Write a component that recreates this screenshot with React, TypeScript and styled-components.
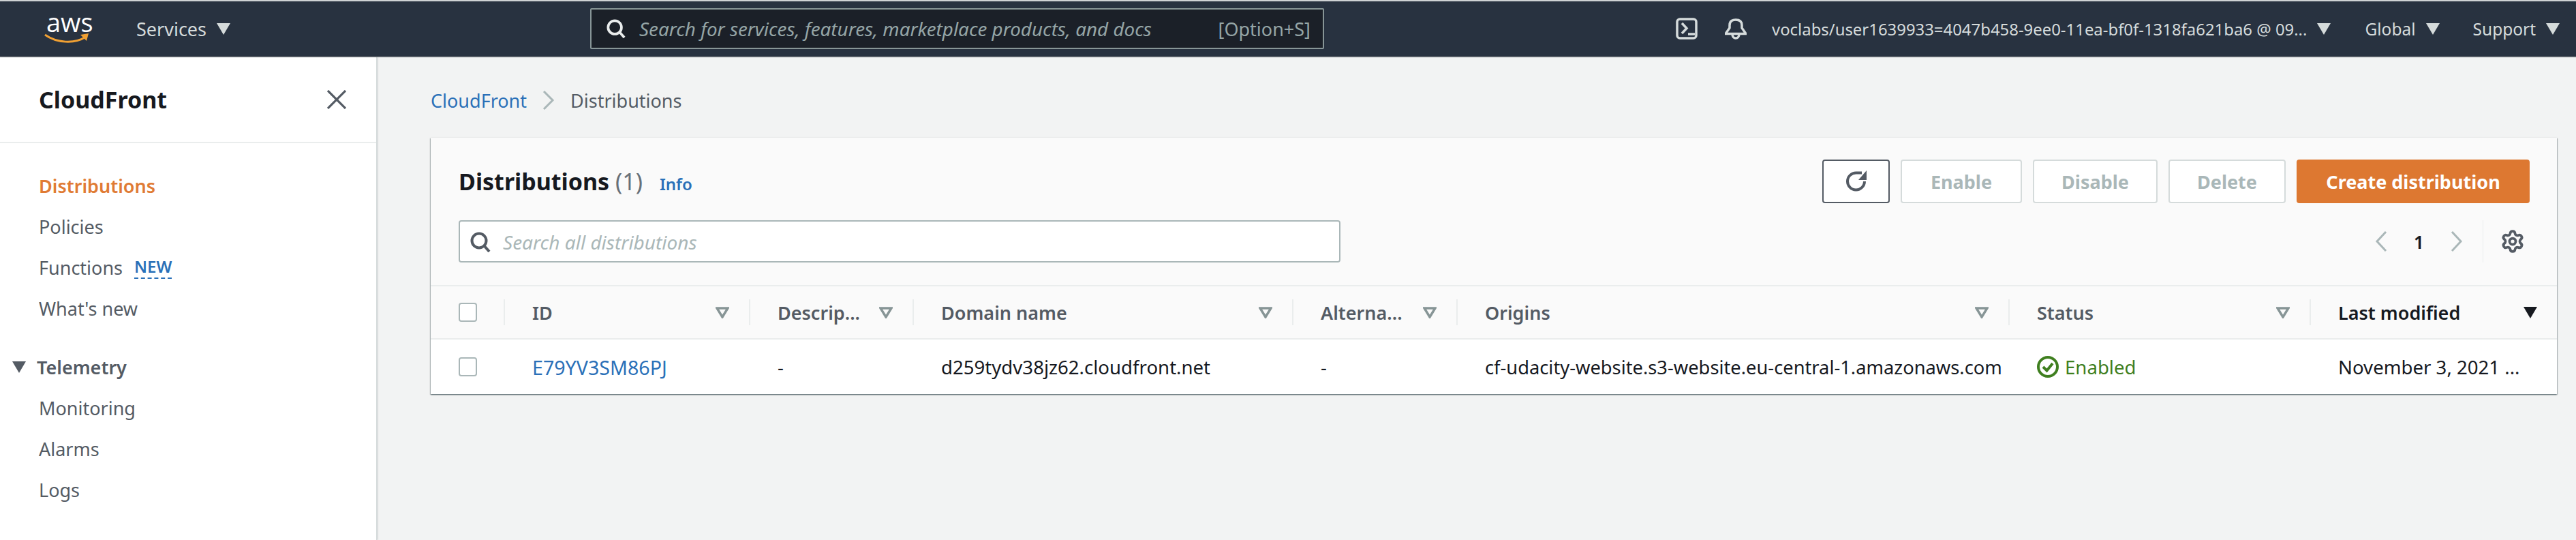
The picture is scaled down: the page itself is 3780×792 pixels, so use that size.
import React from 'react';
import styled, { createGlobalStyle } from 'styled-components';
import { Settings } from 'lucide-react';

const colors = {
  navy: '#283240',
  navyDark: '#1b2028',
  ink: '#16191f',
  slate: '#545b64',
  grey: '#879596',
  pale: '#aab7b8',
  line: '#eaeded',
  page: '#f2f3f3',
  blue: '#2a70b8',
  orange: '#dd7831',
  green: '#3f7f1f',
};

const GlobalStyle = createGlobalStyle`
  html, body {
    margin: 0;
    padding: 0;
    width: 3780px;
    height: 792px;
    overflow: hidden;
    background: ${colors.page};
    font-family: "Noto Sans", "Open Sans", sans-serif;
    font-size: 28px;
    color: ${colors.ink};
  }
  * { box-sizing: border-box; }
`;

const Page = styled.div`
  width: 3780px;
  height: 792px;
  overflow: hidden;
  display: flex;
  flex-direction: column;
`;

/* top bar */

const TopBar = styled.header`
  flex: none;
  height: 84px;
  display: flex;
  align-items: center;
  background: ${colors.navy};
  border-top: 2px solid #cfd2d4;
  border-bottom: 2px solid ${colors.slate};
  padding-left: 65px;
  padding-right: 22px;
`;

const Logo = styled.div`
  width: 66px;
  height: 44px;
  position: relative;
  flex: none;
`;

const LogoWord = styled.span`
  position: absolute;
  left: 3px;
  top: -14px;
  font-family: "Open Sans", sans-serif;
  font-size: 38px;
  line-height: 52px;
  color: #fff;
`;

const Smile = styled.svg`
  position: absolute;
  left: 0;
  bottom: 0;
`;

const BarText = styled.span<{ $size?: number }>`
  font-size: ${({ $size }) => $size ?? 23.9}px;
  color: #d5dbdb;
  white-space: nowrap;
`;

const BarMenu = styled.div<{ $left: number; $gap?: number }>`
  display: flex;
  align-items: center;
  gap: ${({ $gap }) => $gap ?? 15}px;
  margin-left: ${({ $left }) => $left}px;
  flex: none;
`;

const GlobalSearch = styled.div`
  flex: none;
  width: 1077px;
  height: 60px;
  margin-left: 528px;
  display: flex;
  align-items: center;
  padding: 0 18px 0 22px;
  background: ${colors.navyDark};
  border: 2px solid ${colors.grey};
  border-radius: 2px;
`;

const GlobalSearchText = styled.span`
  flex: 1;
  margin-left: 20px;
  font-size: 27.8px;
  font-style: italic;
  color: #95a5a6;
  white-space: nowrap;
`;

const Shortcut = styled.span`
  font-size: 27px;
  color: #95a5a6;
`;

const BarIcons = styled.div`
  display: flex;
  align-items: center;
  gap: 40px;
  margin-left: 516px;
  flex: none;
`;

/* body */

const Body = styled.div`
  flex: 1;
  display: flex;
  min-height: 0;
`;

const Sidebar = styled.aside`
  flex: none;
  width: 553px;
  background: #fff;
  border-right: 1px solid #d5dbdb;
  box-shadow: 1px 0 2px rgba(0, 28, 36, 0.18);
`;

const SidebarHead = styled.div`
  height: 126px;
  display: flex;
  align-items: center;
  justify-content: space-between;
  padding: 0 44px 0 57px;
  border-bottom: 2px solid ${colors.line};
`;

const SidebarTitle = styled.h2`
  margin: 0;
  font-size: 34px;
  font-weight: 700;
  color: ${colors.ink};
`;

const NavList = styled.nav`
  padding-top: 32px;
`;

const NavItem = styled.div<{ $active?: boolean }>`
  height: 60px;
  display: flex;
  align-items: center;
  gap: 17px;
  padding-left: 57px;
  font-size: 27px;
  font-weight: ${({ $active }) => ($active ? 600 : 400)};
  color: ${({ $active }) => ($active ? '#e07b34' : colors.slate)};
`;

const NewBadge = styled.span`
  font-size: 24px;
  font-weight: 600;
  line-height: 32px;
  color: ${colors.blue};
  border-bottom: 2px dashed ${colors.blue};
`;

const NavGroup = styled.div<{ $top: number }>`
  height: 60px;
  margin-top: ${({ $top }) => $top}px;
  display: flex;
  align-items: center;
  gap: 16px;
  padding-left: 18px;
  font-size: 27px;
  font-weight: 600;
  color: ${colors.slate};
`;

const Content = styled.main`
  flex: 1;
  min-width: 0;
  padding: 44px 28px 0 79px;
`;

const Breadcrumb = styled.div`
  height: 38px;
  display: flex;
  align-items: center;
  gap: 23px;
  font-size: 27px;
  color: ${colors.slate};
`;

const Crumb = styled.span`
  color: ${colors.blue};
`;

const Card = styled.section`
  margin-top: 36px;
  background: #fff;
  box-shadow: 0 1px 2px rgba(0, 28, 36, 0.5), 1px 1px 1px rgba(0, 28, 36, 0.15), -1px 1px 1px rgba(0, 28, 36, 0.15);
`;

const CardHead = styled.div`
  height: 218px;
  padding: 32px 40px 0 41px;
  background: #fafafa;
  border-bottom: 2px solid ${colors.line};
  display: flex;
  flex-direction: column;
  gap: 25px;
`;

const HeadRow = styled.div`
  display: flex;
  align-items: center;
  justify-content: space-between;
`;

const TitleGroup = styled.div`
  display: flex;
  align-items: baseline;
  gap: 25px;
`;

const Title = styled.h1`
  margin: 0;
  font-size: 34px;
  font-weight: 700;
  color: ${colors.ink};
`;

const Count = styled.span`
  font-weight: 400;
  color: #687078;
`;

const InfoLink = styled.span`
  font-size: 24px;
  font-weight: 600;
  color: ${colors.blue};
`;

const Actions = styled.div`
  display: flex;
  gap: 16px;
`;

const ActionButton = styled.button<{ $width: number; $variant?: 'icon' | 'primary' }>`
  width: ${({ $width }) => $width}px;
  height: 64px;
  padding: 0;
  display: flex;
  align-items: center;
  justify-content: center;
  font-family: inherit;
  font-size: 27px;
  font-weight: 700;
  border-radius: 4px;
  border: 2px solid ${({ $variant }) => ($variant === 'icon' ? colors.slate : $variant === 'primary' ? colors.orange : '#d5dbdb')};
  background: ${({ $variant }) => ($variant === 'primary' ? colors.orange : '#fff')};
  color: ${({ $variant }) => ($variant === 'primary' ? '#fff' : colors.pale)};
`;

const FilterBox = styled.div`
  width: 1294px;
  height: 62px;
  display: flex;
  align-items: center;
  gap: 18px;
  padding: 2px 0 0 15px;
  background: #fff;
  border: 2px solid ${colors.pale};
  border-radius: 4px;
  font-size: 28px;
  font-style: italic;
  color: ${colors.pale};
`;

const Pager = styled.div`
  display: flex;
  align-items: center;
  height: 62px;
`;

const PageNumber = styled.span`
  width: 93px;
  text-align: center;
  font-size: 27px;
  font-weight: 600;
  color: ${colors.ink};
`;

const GearSlot = styled.div`
  height: 62px;
  margin-left: 29px;
  padding: 0 7px 0 25px;
  display: flex;
  align-items: center;
  border-left: 1px solid ${colors.line};
  color: ${colors.slate};
`;

const GRID = '107px 360px 240px 557px 241px 810px 442px 363px';

const HeaderRow = styled.div`
  display: grid;
  grid-template-columns: ${GRID};
  height: 78px;
  align-items: center;
  background: #fafafa;
  border-bottom: 2px solid ${colors.line};
`;

const DataRow = styled.div`
  display: grid;
  grid-template-columns: ${GRID};
  height: 80px;
  align-items: center;
  background: #fff;
`;

const CheckCell = styled.div`
  padding-left: 41px;
`;

const CheckBox = styled.span`
  display: block;
  width: 27px;
  height: 28px;
  background: #fff;
  border: 2px solid ${colors.pale};
  border-radius: 4px;
`;

const HeadCell = styled.div<{ $sorted?: boolean }>`
  height: 38px;
  display: flex;
  align-items: center;
  justify-content: space-between;
  padding: 0 29px 0 40px;
  border-left: 2px solid ${colors.line};
  font-size: 27px;
  font-weight: 600;
  white-space: nowrap;
  color: ${({ $sorted }) => ($sorted ? colors.ink : colors.slate)};
`;

const Cell = styled.div<{ $link?: boolean; $status?: boolean; $size?: number }>`
  padding-left: 42px;
  display: flex;
  align-items: center;
  gap: 9px;
  font-size: ${({ $size }) => $size ?? 27.6}px;
  white-space: nowrap;
  color: ${({ $link, $status }) => ($link ? colors.blue : $status ? colors.green : colors.ink)};
`;

/* drawings */

const Triangle = ({ size = 20, color = '#d5dbdb' }: { size?: number; color?: string }) => (
  <svg width={size} height={size * 0.85} viewBox="0 0 20 17">
    <polygon points="0,0 20,0 10,17" fill={color} />
  </svg>
);

const SortArrow = ({ sorted }: { sorted?: boolean }) => (
  <svg width="20" height="17" viewBox="0 0 20 17">
    {sorted ? (
      <polygon points="0,0 20,0 10,17" fill={colors.ink} />
    ) : (
      <polygon points="2,2 18,2 10,15" fill="none" stroke={colors.grey} strokeWidth="3.5" />
    )}
  </svg>
);

const SearchIcon = ({ color, size = 30 }: { color: string; size?: number }) => (
  <svg width={size} height={size} viewBox="0 0 30 30" fill="none" stroke={color} strokeWidth="4">
    <circle cx="13" cy="13" r="10.5" />
    <path d="M20.5 20.5 L28 29" />
  </svg>
);

const ChevronLeft = () => (
  <svg width="18" height="30" viewBox="0 0 18 30" fill="none" stroke={colors.pale} strokeWidth="3">
    <path d="M16 1 L3 15 L16 29" />
  </svg>
);

const ChevronRight = () => (
  <svg width="18" height="30" viewBox="0 0 18 30" fill="none" stroke={colors.pale} strokeWidth="3">
    <path d="M2 1 L15 15 L2 29" />
  </svg>
);

const columns = ['ID', 'Descrip...', 'Domain name', 'Alterna...', 'Origins', 'Status'];

export default function App() {
  return (
    <Page>
      <GlobalStyle />
      <TopBar>
        <Logo>
          <LogoWord>aws</LogoWord>
          <Smile width="66" height="16" viewBox="0 0 66 16">
            <path d="M1 3 C18 15 44 17 61 6" fill="none" stroke="#f0a033" strokeWidth="3" />
            <path d="M53 3 L65 1 L62 12 Z" fill="#f0a033" />
          </Smile>
        </Logo>
        <BarMenu $left={69}>
          <BarText $size={27}>Services</BarText>
          <Triangle />
        </BarMenu>
        <GlobalSearch>
          <SearchIcon color="#eaeded" size={28} />
          <GlobalSearchText>Search for services, features, marketplace products, and docs</GlobalSearchText>
          <Shortcut>[Option+S]</Shortcut>
        </GlobalSearch>
        <BarIcons>
          <svg width="32" height="32" viewBox="0 0 32 32" fill="none" stroke="#d5dbdb" strokeWidth="3.5">
            <rect x="2" y="2" width="28" height="28" rx="4" />
            <path d="M9 8 L16 15.5 L9 23" />
            <path d="M18 24 H28" />
          </svg>
          <svg width="32" height="32" viewBox="0 0 32 32" fill="none" stroke="#d5dbdb" strokeWidth="3.5">
            <path d="M1 23.5 H31 L25 15 V11 C25 5 21 3 16 3 C11 3 7 5 7 11 V15 Z" />
            <path d="M11 24 C11 32 21 32 21 24" />
          </svg>
        </BarIcons>
        <BarMenu $left={37}>
          <BarText>voclabs/user1639933=4047b458-9ee0-11ea-bf0f-1318fa621ba6 @ 09...</BarText>
          <Triangle />
        </BarMenu>
        <BarMenu $left={50}>
          <BarText $size={24.5}>Global</BarText>
          <Triangle />
        </BarMenu>
        <BarMenu $left={49}>
          <BarText $size={24.5}>Support</BarText>
          <Triangle />
        </BarMenu>
      </TopBar>
      <Body>
        <Sidebar>
          <SidebarHead>
            <SidebarTitle>CloudFront</SidebarTitle>
            <svg width="28" height="28" viewBox="0 0 28 28" fill="none" stroke={colors.slate} strokeWidth="3.2">
              <path d="M1 1 L27 27 M27 1 L1 27" />
            </svg>
          </SidebarHead>
          <NavList>
            <NavItem $active>Distributions</NavItem>
            <NavItem>Policies</NavItem>
            <NavItem>
              Functions <NewBadge>NEW</NewBadge>
            </NavItem>
            <NavItem>What's new</NavItem>
            <NavGroup $top={26}>
              <Triangle color={colors.slate} />
              Telemetry
            </NavGroup>
            <NavItem>Monitoring</NavItem>
            <NavItem>Alarms</NavItem>
            <NavItem>Logs</NavItem>
            <NavGroup $top={28}>
              <Triangle color={colors.slate} />
              Reports &amp; analytics
            </NavGroup>
          </NavList>
        </Sidebar>
        <Content>
          <Breadcrumb>
            <Crumb>CloudFront</Crumb>
            <svg width="18" height="28" viewBox="0 0 18 28" fill="none" stroke={colors.pale} strokeWidth="3">
              <path d="M2 1 L15 14 L2 27" />
            </svg>
            Distributions
          </Breadcrumb>
          <Card>
            <CardHead>
              <HeadRow>
                <TitleGroup>
                  <Title>
                    Distributions <Count>(1)</Count>
                  </Title>
                  <InfoLink>Info</InfoLink>
                </TitleGroup>
                <Actions>
                  <ActionButton $width={99} $variant="icon">
                    <svg width="32" height="32" viewBox="0 0 32 32" fill="none" stroke={colors.slate} strokeWidth="4">
                      <path d="M28 16 A12.5 12.5 0 1 1 16 3.5 H24" />
                      <polygon points="31,0 31,14 19,14" fill={colors.slate} stroke="none" />
                    </svg>
                  </ActionButton>
                  <ActionButton $width={178}>Enable</ActionButton>
                  <ActionButton $width={183}>Disable</ActionButton>
                  <ActionButton $width={172}>Delete</ActionButton>
                  <ActionButton $width={342} $variant="primary">
                    Create distribution
                  </ActionButton>
                </Actions>
              </HeadRow>
              <HeadRow>
                <FilterBox>
                  <SearchIcon color={colors.slate} />
                  Search all distributions
                </FilterBox>
                <Pager>
                  <ChevronLeft />
                  <PageNumber>1</PageNumber>
                  <ChevronRight />
                  <GearSlot>
                    <Settings size={36} strokeWidth={2.5} />
                  </GearSlot>
                </Pager>
              </HeadRow>
            </CardHead>
            <HeaderRow>
              <CheckCell>
                <CheckBox />
              </CheckCell>
              {columns.map((name) => (
                <HeadCell key={name}>
                  {name}
                  <SortArrow />
                </HeadCell>
              ))}
              <HeadCell $sorted>
                Last modified
                <SortArrow sorted />
              </HeadCell>
            </HeaderRow>
            <DataRow>
              <CheckCell>
                <CheckBox />
              </CheckCell>
              <Cell $link $size={28.6}>E79YV3SM86PJ</Cell>
              <Cell>-</Cell>
              <Cell>d259tydv38jz62.cloudfront.net</Cell>
              <Cell>-</Cell>
              <Cell $size={27.3}>cf-udacity-website.s3-website.eu-central-1.amazonaws.com</Cell>
              <Cell $status>
                <svg width="32" height="32" viewBox="0 0 32 32" fill="none" stroke={colors.green} strokeWidth="4">
                  <circle cx="16" cy="16" r="14" />
                  <path d="M9 16 L14.5 21.5 L23 11" />
                </svg>
                Enabled
              </Cell>
              <Cell>November 3, 2021 ...</Cell>
            </DataRow>
          </Card>
        </Content>
      </Body>
    </Page>
  );
}
